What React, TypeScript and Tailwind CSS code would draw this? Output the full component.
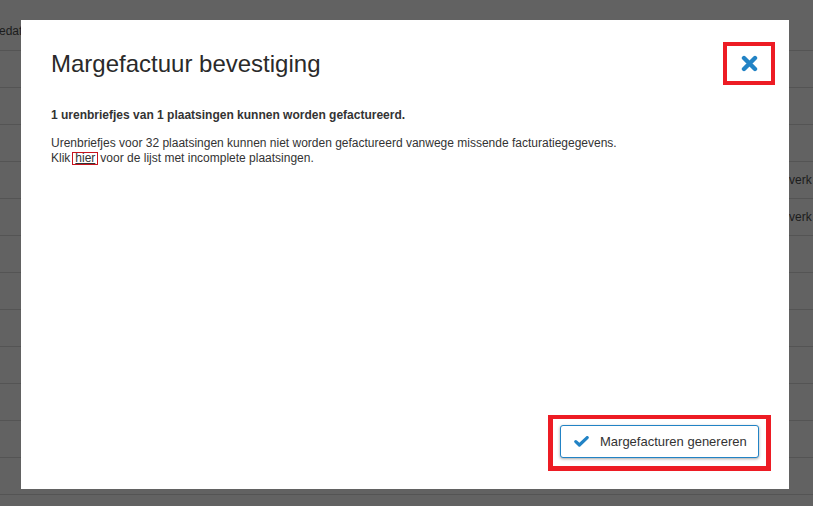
import { useMemo } from 'react'

const rowCount = 12

function CloseIcon() {
  return (
    <svg width="17" height="17" viewBox="0 0 17 17" aria-hidden="true">
      <path d="M3 3 L14 14 M14 3 L3 14" stroke="#2283c5" strokeWidth="4.4" strokeLinecap="round" fill="none" />
    </svg>
  )
}

function CheckIcon() {
  return (
    <svg width="15" height="11" viewBox="0 0 15 11" aria-hidden="true">
      <path d="M1.8 5.6 L5.4 9 L13.2 1.6" stroke="#2283c5" strokeWidth="3.2" strokeLinecap="round" strokeLinejoin="round" fill="none" />
    </svg>
  )
}

export default function App() {
  const rows = useMemo(() => Array.from({ length: rowCount }, (_, i) => i), [])

  return (
    <div className="relative h-[506px] w-[813px] overflow-hidden bg-[#626262] font-['Liberation_Sans',Arial,sans-serif] text-[#333]">
      {/* table behind the backdrop */}
      <div className="flex flex-col">
        <div className="h-[51px] border-b border-[#545454] pt-[24px] text-[12px] leading-[15px] text-[#1c1c1c]">
          <span className="ml-[-1px]">edat</span>
        </div>
        {rows.map((i) => (
          <div key={i} className="flex h-[37px] border-b border-[#545454] text-[12px] leading-[36px] text-[#1c1c1c]">
            <div className="w-[789px] shrink-0" />
            {(i === 3 || i === 4) && <span>verk</span>}
          </div>
        ))}
      </div>

      {/* modal */}
      <div className="absolute left-[21px] top-[20px] flex h-[469px] w-[768px] flex-col bg-white">
        <div className="flex items-center justify-between pl-[30px] pr-[14px] pt-[22px]">
          <h1 className="text-[24px] font-normal leading-[27px] text-[#2a2a2a]">Margefactuur bevestiging</h1>
          <button
            type="button"
            className="flex h-[43px] w-[52px] items-center justify-center border-[4px] border-[#ed1c24] bg-white"
            title="Sluiten"
          >
            <CloseIcon />
          </button>
        </div>

        <div className="flex-1 px-[30px] pt-[23px] text-[12px] leading-[14.4px]">
          <p className="font-bold">1 urenbriefjes van 1 plaatsingen kunnen worden gefactureerd.</p>
          <p className="mt-[14px]">
            Urenbriefjes voor 32 plaatsingen kunnen niet worden gefactureerd vanwege missende facturatiegegevens.
            <br />
            Klik
            <a className="ml-[2px] mr-[2px] inline-block border border-[#c8141e] pb-[1px] pl-[2px] pr-[2px] leading-[10px] text-[#333] underline">
              hier
            </a>
            voor de lijst met incomplete plaatsingen.
          </p>
        </div>

        <div className="flex justify-end pb-[18px] pr-[18px]">
          <div className="border-[5px] border-t-[4px] border-[#ed1c24] px-[7px] pb-[8px] pt-[6px]">
            <button
              type="button"
              className="flex h-[33px] w-[199px] items-center gap-[11px] rounded-[3px] border border-[#2283c5] bg-white pl-[13px] text-[13px] text-[#333] shadow-[0_1px_3px_rgba(0,0,0,0.35)]"
            >
              <CheckIcon />
              Margefacturen genereren
            </button>
          </div>
        </div>
      </div>
    </div>
  )
}
